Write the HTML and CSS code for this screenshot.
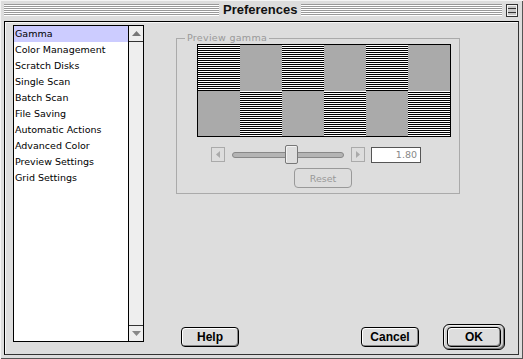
FILE: index.html
```html
<!DOCTYPE html>
<html lang="en">
<head>
    <meta charset="UTF-8">
    <title>Preferences</title>
    <link rel="stylesheet" href="styles.css">
</head>
<body>

<div class="window">
    <div class="titlebar">
        <span class="stripes left"></span>
        <span class="title">Preferences</span>
        <span class="stripes"></span>
        <svg class="shade-box" width="12" height="13" viewBox="0 0 12 13">
            <rect x="0.5" y="0.5" width="11" height="12" fill="#c8c8c8" stroke="#333"/>
            <rect x="1.5" y="1.5" width="9" height="10" fill="none" stroke="#f4f4f4"/>
            <line x1="2" y1="4.5" x2="10" y2="4.5" stroke="#333"/>
            <line x1="2" y1="8.5" x2="10" y2="8.5" stroke="#333"/>
        </svg>
    </div>

    <div class="panel">
        <div class="list">
            <ul class="items">
                <li class="selected">Gamma</li>
                <li>Color Management</li>
                <li>Scratch Disks</li>
                <li>Single Scan</li>
                <li>Batch Scan</li>
                <li>File Saving</li>
                <li>Automatic Actions</li>
                <li>Advanced Color</li>
                <li>Preview Settings</li>
                <li>Grid Settings</li>
            </ul>
            <div class="scrollbar">
                <div class="scroll-btn up">
                    <svg width="9" height="5" viewBox="0 0 9 5"><polygon points="4.5,0 9,5 0,5" fill="#777"/></svg>
                </div>
                <div class="scroll-track"></div>
                <div class="scroll-btn down">
                    <svg width="9" height="5" viewBox="0 0 9 5"><polygon points="0,0 9,0 4.5,5" fill="#888"/></svg>
                </div>
            </div>
        </div>

        <div class="main">
            <fieldset class="group">
                <legend>Preview gamma</legend>
                <div class="group-body">
                    <div class="gamma-grid">
                        <div class="lines"></div><div class="flat"></div><div class="lines"></div>
                        <div class="flat"></div><div class="lines"></div><div class="flat"></div>
                        <div class="flat"></div><div class="lines"></div><div class="flat"></div>
                        <div class="lines"></div><div class="flat"></div><div class="lines"></div>
                    </div>

                    <div class="slider-row">
                        <span class="arrow-box">
                            <svg width="4" height="7" viewBox="0 0 4 7"><polygon points="4,0 4,7 0,3.5" fill="#aaa"/></svg>
                        </span>
                        <div class="slider">
                            <div class="slider-track"></div>
                            <div class="slider-thumb"></div>
                        </div>
                        <span class="arrow-box">
                            <svg width="4" height="7" viewBox="0 0 4 7"><polygon points="0,0 4,3.5 0,7" fill="#aaa"/></svg>
                        </span>
                        <div class="value-field">1.80</div>
                    </div>

                    <button class="reset">Reset</button>
                </div>
            </fieldset>

            <div class="actions">
                <button class="btn help">Help</button>
                <button class="btn cancel">Cancel</button>
                <span class="default-ring"><button class="btn ok">OK</button></span>
            </div>
        </div>
    </div>
</div>

</body>
</html>
```

FILE: styles.css
```css
body {
    margin: 0;
    padding: 0;
    background-color: #dddddd;
    font-family: "DejaVu Sans", sans-serif;
}
.window {
    width: 523px;
    height: 359px;
    box-sizing: border-box;
    background-color: #dddddd;
    padding: 0 4px 4px 4px;
    display: flex;
    flex-direction: column;
    box-shadow: inset 1px 1px #f4f4f4, inset -1px -1px #555;
}

/* заголовок окна */
.titlebar {
    height: 21px;
    box-sizing: border-box;
    padding-top: 4px;
    display: flex;
    align-items: flex-start;
}
.stripes {
    flex: 1;
    height: 12px;
    background: repeating-linear-gradient(to bottom, #999 0 1px, #fff 1px 2px);
}
.stripes.left {
    flex: 0 0 215px;
}
.title {
    font-family: "Liberation Sans", Arial, sans-serif;
    font-weight: bold;
    font-size: 13px;
    line-height: 12px;
    color: #111;
    padding: 0 4px;
}
.shade-box {
    margin-left: 4px;
    margin-right: 1px;
}

/* основная панель */
.panel {
    flex: 1;
    display: flex;
    align-items: stretch;
    border: 1px solid #000;
    border-right-color: #333;
    border-bottom-color: #333;
    box-shadow: inset 1px 1px #f6f6f6;
    padding: 3px 0 4px 8px;
}

.list {
    width: 131px;
    height: 317px;
    box-sizing: border-box;
    border: 1px solid #000;
    background-color: #fff;
    display: flex;
    margin-bottom: 6px;
}
.items {
    list-style: none;
    margin: 0;
    padding: 0;
    flex: 1;
    font-size: 9.5px;
}
.items li {
    height: 16px;
    line-height: 16px;
    padding-left: 1px;
    color: #000;
    white-space: nowrap;
}
.items li.selected {
    background-color: #ccccff;
}
.scrollbar {
    width: 15px;
    box-sizing: border-box;
    border-left: 1px solid #000;
    background-color: #eeeeee;
    display: flex;
    flex-direction: column;
}
.scroll-btn {
    height: 15px;
    display: flex;
    align-items: center;
    justify-content: center;
}
.scroll-btn.up {
    border-bottom: 1px solid #333;
}
.scroll-btn.down {
    border-top: 1px solid #333;
}
.scroll-track {
    flex: 1;
}

/* правая часть */
.main {
    flex: 1;
    display: flex;
    flex-direction: column;
    margin-left: 32px;
}
.group {
    width: 284px;
    box-sizing: border-box;
    margin: 7px 0 0 0;
    padding: 0 8px 5px 8px;
    border: 1px solid #aaaaaa;
    min-width: 0;
}
.group legend {
    font-size: 9.5px;
    line-height: 12px;
    color: #999;
    padding: 0 2px;
    letter-spacing: 0.3px;
}
.group-body {
    margin-left: 12px;
}

.gamma-grid {
    width: 254px;
    box-sizing: border-box;
    border: 1px solid #000;
    display: grid;
    grid-template-columns: repeat(6, 42px);
    grid-template-rows: 46px 45px;
}
.gamma-grid .lines {
    background: repeating-linear-gradient(to bottom, #fff 0 1px, #000 1px 2px);
}
.gamma-grid .flat {
    background-color: #aaaaaa;
}

.slider-row {
    display: flex;
    align-items: center;
    height: 19px;
    margin-top: 8px;
    margin-left: 14px;
}
.arrow-box {
    width: 14px;
    height: 15px;
    box-sizing: border-box;
    border: 1px solid #aaa;
    display: flex;
    align-items: center;
    justify-content: center;
}
.slider {
    position: relative;
    width: 112px;
    height: 19px;
    margin: 0 7px;
}
.slider-track {
    height: 6px;
    margin-top: 7px;
    box-sizing: border-box;
    border: 1px solid #888;
    border-radius: 3px;
    background-color: #b4b4b4;
}
.slider-thumb {
    position: absolute;
    left: 53px;
    top: 0;
    width: 13px;
    height: 19px;
    box-sizing: border-box;
    border: 1px solid #777;
    border-radius: 2px;
    background-color: #dedede;
    box-shadow: inset 1px 1px #f2f2f2;
}
.value-field {
    width: 50px;
    height: 16px;
    box-sizing: border-box;
    margin-left: 6px;
    border: 1px solid #555;
    background-color: #fff;
    font-size: 9.5px;
    line-height: 14px;
    text-align: right;
    padding-right: 3px;
    color: #888;
}

.reset {
    display: block;
    width: 58px;
    height: 20px;
    margin: 4px 0 0 97px;
    padding: 0;
    border: 1px solid #999;
    border-radius: 4px;
    background-color: #dddddd;
    font-family: "DejaVu Sans", sans-serif;
    font-size: 9.5px;
    color: #999;
}

/* кнопки внизу */
.actions {
    margin-top: auto;
    height: 26px;
    display: flex;
    align-items: center;
    padding-right: 13px;
}
.btn {
    width: 58px;
    height: 20px;
    padding: 0;
    border: 1px solid #000;
    border-radius: 4px;
    background-color: #dddddd;
    box-shadow: inset 1px 1px #fff, inset -1px -1px #888;
    font-family: "Liberation Sans", Arial, sans-serif;
    font-weight: bold;
    font-size: 12px;
    color: #000;
}
.help {
    margin-left: 5px;
}
.cancel {
    margin-left: auto;
}
.default-ring {
    margin-left: 24px;
    width: 62px;
    height: 26px;
    box-sizing: border-box;
    border: 1px solid #000;
    border-radius: 6px;
    background-color: #cfcfcf;
    box-shadow: inset 1px 1px #eee, inset -1px -1px #777;
    display: flex;
    align-items: center;
    justify-content: center;
}
.ok {
    width: 54px;
}
```
